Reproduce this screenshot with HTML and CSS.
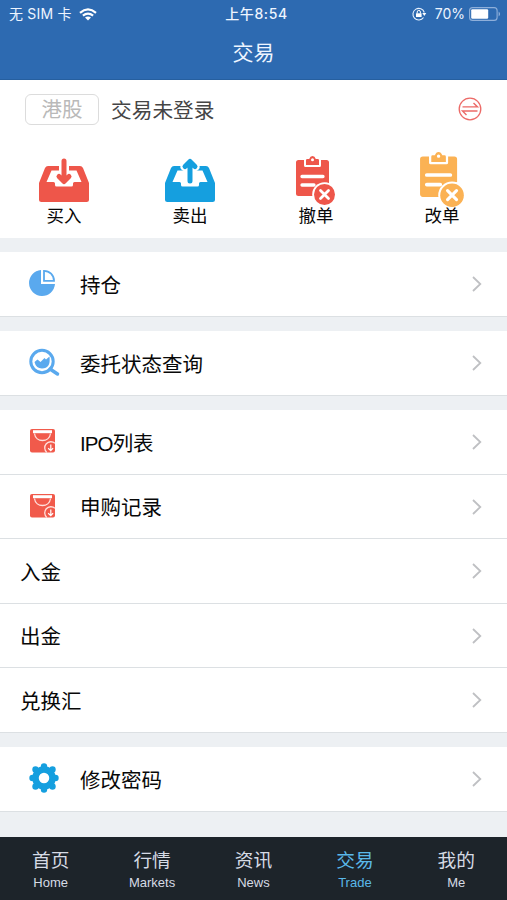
FILE: index.html
```html
<!DOCTYPE html>
<html lang="zh-CN">
<head>
<meta charset="utf-8">
<meta name="viewport" content="width=device-width, initial-scale=1">
<title>交易</title>
<link rel="stylesheet" href="styles.css">
</head>
<body>
<svg class="defs" aria-hidden="true">
  <symbol id="chevron" viewBox="0 0 10 16"><path d="M1 1l7.300 7L1 15" fill="none" stroke="#bfc0c3" stroke-width="1.800"/></symbol>
  <symbol id="tray" viewBox="0 0 50 36"><path fill="currentColor" fill-rule="evenodd" d="M9 0H20V4.500H12.500L7.500 16H14.500Q16 16 16 17.500V19Q16 20.500 17.500 20.500H32.500Q34 20.500 34 19V17.500Q34 16 35.500 16H42.500L37.500 4.500H30V0H41Q43 0 44 2L50 17V33.500Q50 36 47.500 36H2.500Q0 36 0 33.500V17L6 2Q7 0 9 0Z"/></symbol>
  <symbol id="clipboard" viewBox="0 0 40 49">
    <path fill="currentColor" d="M2.500 4H8v5.500q0 1.500 1.500 1.500h14q1.500 0 1.500-1.500V4h5.500Q33 4 33 6.500V27q-12-2-14 13H2.500Q0 40 0 37.500v-31Q0 4 2.500 4Z"/>
    <path fill="currentColor" fill-rule="evenodd" d="M11.200 3h2q1-3 3.300-3T19.800 3h2Q23 3 23 4.200V9H10V4.200Q10 3 11.200 3zM16.500 2.200a1.500 1.500 0 1 0 0 3a1.500 1.500 0 1 0 0-3Z"/>
    <path d="M6 20.500h21M6 29h12" stroke="#fff" stroke-width="3.300" stroke-linecap="round"/>
    <circle cx="28.500" cy="38.500" r="12.300" fill="#fff"/><circle cx="28.500" cy="38.500" r="10.500" fill="currentColor"/>
    <path d="M24.500 34.500l8 8m0-8l-8 8" stroke="#fff" stroke-width="2.800" stroke-linecap="round"/>
  </symbol>
  <symbol id="wallet" viewBox="0 0 26 24">
    <rect width="25" height="23.500" rx="2" fill="#f15a4b"/><path d="M3 2.700h19" stroke="#fff" stroke-width="3"/><path d="M4.500 4.500c1 9.300 15 9.300 16 0" fill="none" stroke="#ffe1dd" stroke-width="1.300"/>
    <path d="M25 14.300A6 6 0 1 0 16.800 23.500" fill="none" stroke="#ffe1dd" stroke-width="1.300"/><path d="M20.800 15.500v6m-2.600-2.300 2.600 2.500 2.300-2.500" fill="none" stroke="#fff" stroke-width="1.200"/>
  </symbol>
</svg>
<div class="app">
  <header class="header">
    <div class="status">
      <div class="carrier"><span>无 SIM 卡</span><svg width="18" height="13" viewBox="0 0 18 13" fill="none" stroke="#fff" stroke-width="2.200"><path d="M1 4.800Q9-2 17 4.800M3.900 7.700Q9 3.400 14.100 7.700"/><path d="M6 9.600Q9 7.200 12 9.600L9 12.600Z" fill="#fff" stroke="none"/></svg></div>
      <div class="time">上午8:54</div>
      <div class="power">
        <svg width="14" height="14" viewBox="0 0 14 14"><path d="M11.500 10.500A5.800 5.800 0 1 1 12.300 5.500" fill="none" stroke="#e8f2ff" stroke-width="1.100"/><path d="M10.300 6h4l-2 3z" fill="#fff"/><path d="M4 6.300h5.600V10H4z" fill="#fff"/><path d="M5.200 6.500V5a1.600 1.600 0 0 1 3.200 0v1.500" fill="none" stroke="#fff"/></svg>
        <span>70%</span>
        <svg width="32" height="14" viewBox="0 0 32 14"><rect x=".6" y=".6" width="27.500" height="12.800" rx="3" fill="none" stroke="#8eafda" stroke-width="1.100"/><rect x="2.200" y="2.200" width="17" height="9.600" rx="1.200" fill="#fff"/><path d="M29.600 4.500q3 2.500 0 5z" fill="#8eafda"/></svg>
      </div>
    </div>
    <h1 class="title">交易</h1>
  </header>
  <main class="content">
    <section class="account">
      <div class="account-bar">
        <span class="market">港股</span><span class="login">交易未登录</span>
        <svg class="switch" width="24" height="24" viewBox="0 0 24 24" fill="none" stroke="#ec6a67"><circle cx="12" cy="12" r="10.800" stroke-width="1.300"/><path d="M4.500 9.900H19.500L15.500 6M19.500 14H4.500L8.500 18" stroke-width="1.400"/></svg>
      </div>
      <div class="actions">
        <div class="action red"><svg class="trade-icon" viewBox="0 0 50 43"><use href="#tray" y="7" width="50" height="36"/><path d="M25 2V22M20 17.500 25 22.500l5-5" fill="none" stroke="currentColor" stroke-width="5" stroke-linecap="round" stroke-linejoin="round"/></svg><span>买入</span></div>
        <div class="action blue"><svg class="trade-icon" viewBox="0 0 50 43"><use href="#tray" y="7" width="50" height="36"/><path class="halo" d="M25 22V2.500M19.500 8 25 2.500 30.500 8"/><path d="M25 22V2.500M20 7.500 25 2.500 30 7.500" fill="none" stroke="currentColor" stroke-width="5" stroke-linecap="round" stroke-linejoin="round"/></svg><span>卖出</span></div>
        <div class="action red"><svg class="cancel-icon"><use href="#clipboard"/></svg><span>撤单</span></div>
        <div class="action orange"><svg class="change-icon"><use href="#clipboard"/></svg><span>改单</span></div>
      </div>
    </section>
    <section class="group">
      <div class="row"><span class="icon"><svg width="27" height="28" viewBox="0 0 27 28"><path d="M12 1A13 13 0 1 0 26 15H12Z" fill="#5aa9ee"/><path d="M15 1.800V11.800H25A10 10 0 0 0 15 1.800Z" fill="none" stroke="#5aa9ee" stroke-width="1.800"/></svg></span><span>持仓</span><svg class="chevron"><use href="#chevron"/></svg></div>
    </section>
    <section class="group">
      <div class="row"><span class="icon"><svg class="search-icon" width="31" height="28" viewBox="0 0 31 28"><circle cx="13" cy="13.500" r="11.200" fill="none" stroke="#5aa9ee" stroke-width="3"/><path d="M21 21l7.500 5" stroke="#5aa9ee" stroke-width="3.500" stroke-linecap="round"/><path d="M5.500 14l3-2.500 3 2.500 4-4 1.500 1.500 3.500-3q1.500 12-7.500 12-6 0-7.500-6.500Z" fill="#5aa9ee"/></svg></span><span>委托状态查询</span><svg class="chevron"><use href="#chevron"/></svg></div>
    </section>
    <section class="group">
      <div class="row"><span class="icon"><svg class="wallet"><use href="#wallet"/></svg></span><span><span class="latin">IPO</span>列表</span><svg class="chevron"><use href="#chevron"/></svg></div>
      <div class="row"><span class="icon"><svg class="wallet"><use href="#wallet"/></svg></span><span>申购记录</span><svg class="chevron"><use href="#chevron"/></svg></div>
      <div class="row"><span>入金</span><svg class="chevron"><use href="#chevron"/></svg></div>
      <div class="row"><span>出金</span><svg class="chevron"><use href="#chevron"/></svg></div>
      <div class="row"><span>兑换汇</span><svg class="chevron"><use href="#chevron"/></svg></div>
    </section>
    <section class="group">
      <div class="row"><span class="icon"><svg width="30" height="30" viewBox="-15 -15 30 30" fill="#159fdf"><circle r="8.500" fill="none" stroke="#159fdf" stroke-width="6.500"/><g><circle cy="-11.500" r="3.200"/><circle cy="11.500" r="3.200"/><circle cx="-11.500" r="3.200"/><circle cx="11.500" r="3.200"/><circle cx="8.500" cy="8.500" r="3.200"/><circle cx="-8.500" cy="8.500" r="3.200"/><circle cx="8.500" cy="-8.500" r="3.200"/><circle cx="-8.500" cy="-8.500" r="3.200"/></g></svg></span><span>修改密码</span><svg class="chevron"><use href="#chevron"/></svg></div>
    </section>
  </main>
  <nav class="nav">
    <a><span>首页</span><small>Home</small></a><a><span>行情</span><small>Markets</small></a><a><span>资讯</span><small>News</small></a><a class="active"><span>交易</span><small>Trade</small></a><a><span>我的</span><small>Me</small></a>
  </nav>
</div>
</body>
</html>
```
FILE: styles.css
```css
* { box-sizing: border-box; }
body { margin: 0; font-family: "Liberation Sans", "Noto Sans CJK SC", sans-serif; color: #080808; }
.defs { display: none; }
svg { display: block; flex: none; overflow: visible; }
.app { height: 900px; display: flex; flex-direction: column; background: #edf0f3; overflow: hidden; }
.header { flex: none; height: 80px; background: #2d6ab1; color: #eef5ff; border-bottom: 1px solid #265f9f; }
.status { display: grid; grid-template-columns: 1fr auto 1fr; align-items: center; height: 28px; padding: 0 6px 0 9px; font-family: Inter, "Noto Sans CJK SC", sans-serif; font-size: 14px; line-height: 20px; }
.carrier, .power { display: flex; align-items: center; }
.carrier { gap: 7px; font-size: 14px; letter-spacing: .2px; }
.time { font-weight: 500; font-size: 14px; letter-spacing: .6px; padding-left: 3px; }
.power { justify-content: flex-end; }
.power span { margin: 0 4px 0 9px; }
.title { margin: 6px 0 0; text-align: center; font-size: 21px; line-height: 38px; font-weight: 400; }
.content { flex: 1; min-height: 0; }
.account { height: 158px; background: #fff; }
.account-bar { height: 58px; display: flex; align-items: center; padding: 0 25px; }
.market { width: 74px; height: 31px; border: 1.500px solid #dcdcdc; border-radius: 6px; color: #b9b9b9; font-size: 20.500px; line-height: 30px; text-align: center; }
.login { margin-left: 12px; font-size: 20.700px; color: #454545; }
.switch { margin-left: auto; }
.actions { display: grid; grid-template-columns: repeat(4, 126px); height: 90px; padding-left: 1px; }
.action { display: flex; flex-direction: column; align-items: center; justify-content: flex-end; }
.action span { color: #080808; font-size: 17.500px; line-height: 24px; z-index: 1; }
.red { color: #ee564a; }
.blue { color: #159fdf; }
.orange { color: #fbb254; }
.trade-icon { width: 50px; height: 43px; margin-bottom: 2px; }
.halo { fill: none; stroke: #fff; stroke-width: 8px; stroke-linecap: round; stroke-linejoin: round; }
.cancel-icon { width: 40px; height: 49px; margin-bottom: -1px; }
.change-icon { width: 45px; height: 55px; margin-bottom: -3px; }
.group { margin-top: 14.500px; background: #fff; }
.account + .group { margin-top: 14px; }
.row { height: 64.500px; display: flex; align-items: center; padding: 4px 25px 0 20px; border-bottom: 1px solid #dce0e3; font-size: 20.500px; line-height: 30px; }
.icon { width: 60px; padding-left: 9px; margin-top: -5px; }
.latin { letter-spacing: -.9px; }
.wallet { width: 26px; height: 24px; margin-left: 1px; }
.chevron { width: 10px; height: 16px; margin: -3px 0 0 auto; }
.nav { flex: none; height: 63px; display: grid; grid-template-columns: repeat(5, 1fr); background: #1d242a; color: #d6dbe5; padding-top: 10px; }
.nav a { display: flex; flex-direction: column; align-items: center; }
.nav span { font-size: 18.700px; line-height: 28px; }
.nav small { font-size: 13px; line-height: 16px; }
.nav .active { color: #5ab8e9; }
```
